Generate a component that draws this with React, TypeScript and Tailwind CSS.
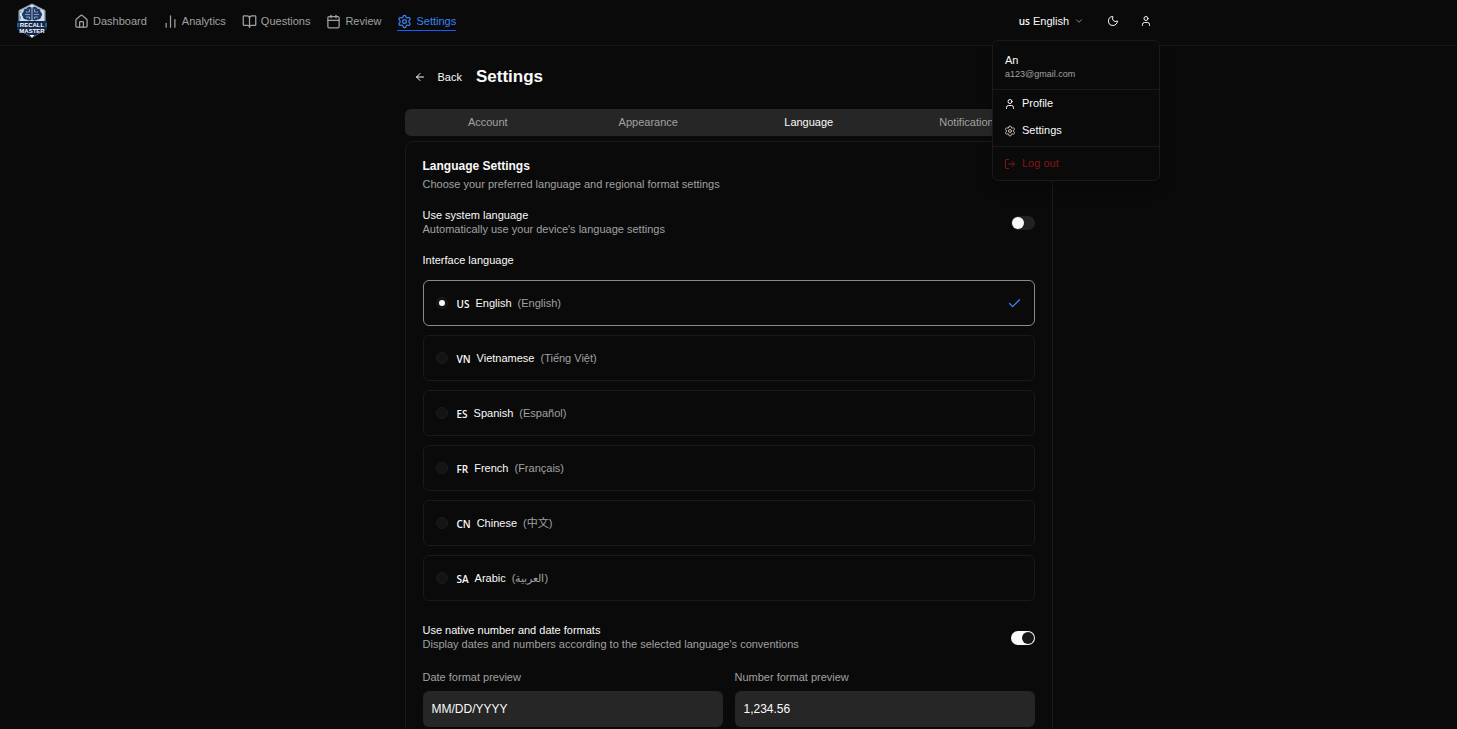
import { useState } from "react";
import type { ReactNode } from "react";
import {
  ArrowLeft,
  BookOpen,
  Calendar,
  ChartNoAxesColumn,
  Check,
  ChevronDown,
  House,
  LogOut,
  Moon,
  Settings,
  User,
} from "lucide-react";

const navItems = [
  { label: "Dashboard", icon: House, active: false },
  { label: "Analytics", icon: ChartNoAxesColumn, active: false },
  { label: "Questions", icon: BookOpen, active: false },
  { label: "Review", icon: Calendar, active: false },
  { label: "Settings", icon: Settings, active: true },
];

const tabs = ["Account", "Appearance", "Language", "Notifications"];

const languages = [
  { code: "US", name: "English", native: "English" },
  { code: "VN", name: "Vietnamese", native: "Tiếng Việt" },
  { code: "ES", name: "Spanish", native: "Español" },
  { code: "FR", name: "French", native: "Français" },
  { code: "CN", name: "Chinese", native: "中文" },
  { code: "SA", name: "Arabic", native: "العربية" },
];

function Logo() {
  return (
    <svg viewBox="0 0 32 36" className="h-9 w-8" role="img" aria-label="Recall Master">
      <path d="M16 1 29 7.500v19L16 34.500 3 26.500V7.500Z" fill="#12284f" stroke="#c9d5e4" strokeWidth="0.800" />
      <path d="M16 1.500 28.500 7.800V18h-25V7.800Z" fill="#d3dde9" />
      <path
        d="M15.600 4.500c-2-1.400-4.300-.3-4.700 1-2.400-.1-3.800 1.600-3.300 3.300-2 1.200-2.200 3.700-.6 5 0 2 2 3.200 3.800 2.700 1.300 1.300 3.600 1.300 4.800.2Z M16.400 4.500c2-1.400 4.300-.3 4.700 1 2.400-.1 3.800 1.600 3.300 3.300 2 1.200 2.200 3.700.6 5 0 2-2 3.200-3.800 2.700-1.300 1.300-3.600 1.300-4.800.2Z"
        fill="#203a66"
      />
      <path
        d="M13.500 6v3H10M14 11.500H9M13.500 16v-2H10M18.500 6v3H22M18 11.500h5M18.500 16v-2H22"
        fill="none"
        stroke="#b9c9dd"
        strokeWidth="0.700"
      />
      <path d="M1 18h30v9l-3 .5L16 34.500 4 27.500 1 27Z" fill="#12284f" />
      <path d="M5 8v2M4.500 13v3M2 20v4M30 20v4" stroke="#3fa2c9" strokeWidth="0.900" />
      <path d="M13.500 32h5L16 34.500Z" fill="#ffffff" />
      <g fill="#ffffff" textAnchor="middle" className="font-['Liberation_Sans',Arial,sans-serif] font-bold">
        <text x="16" y="24" fontSize="6">RECALL</text>
        <text x="16" y="29.500" fontSize="6">MASTER</text>
      </g>
    </svg>
  );
}

function Header() {
  return (
    <header className="border-b border-[#171717]">
      <div className="flex h-[45px] max-w-[1160px] items-center justify-between pr-[7px] pl-4">
        <div className="flex items-center gap-[26px]">
          <a href="#home" className="-mt-1">
            <Logo />
          </a>
          <nav className="flex gap-4 pb-px">
            {navItems.map(({ label, icon: Icon, active }) => (
              <a
                key={label}
                href={`#${label.toLowerCase()}`}
                aria-current={active ? "page" : undefined}
                className={
                  active
                    ? "flex h-[18px] items-center gap-1 border-b border-[#155dfc] text-[#3b82f6]"
                    : "flex h-[18px] items-center gap-1 border-b border-transparent text-[#a1a1a1]"
                }
              >
                <Icon size={15} />
                {label}
              </a>
            ))}
          </nav>
        </div>
        <div className="flex items-center gap-5 pb-[3px]">
          <button type="button" className="mr-[3px] flex items-center gap-[3px]">
            <span className="font-['Open_Sans',sans-serif] text-[10px] font-semibold">us</span>
            English
            <ChevronDown size={10} className="ml-0.5 text-[#a1a1a1]" />
          </button>
          <button type="button" aria-label="Toggle theme">
            <Moon size={12} />
          </button>
          <div className="relative mx-px flex">
            <button type="button" aria-label="Account menu">
              <User size={12} />
            </button>
            <AccountMenu />
          </div>
        </div>
      </div>
    </header>
  );
}

function AccountMenu() {
  return (
    <div className="absolute top-[25px] -right-2 z-10 w-[168px] rounded-md border border-[#1a1a1a] bg-[#0a0a0a] shadow-lg">
      <div className="border-b border-[#1a1a1a] px-3 pt-3 pb-2 leading-[14px]">
        <p>An</p>
        <p className="text-[9px] text-[#a1a1a1]">a123@gmail.com</p>
      </div>
      <div className="border-b border-[#1a1a1a] pb-0.5">
        <a href="#profile" className="flex h-[27px] items-center gap-1.5 px-[11px]">
          <User size={12} />
          Profile
        </a>
        <a href="#settings" className="flex h-[27px] items-center gap-1.5 px-[11px]">
          <Settings size={12} className="text-[#c4c4c4]" />
          Settings
        </a>
      </div>
      <button type="button" className="my-[3px] flex h-[27px] w-full items-center gap-1.5 px-[11px] text-[#82181a]">
        <LogOut size={12} />
        Log out
      </button>
    </div>
  );
}

function Switch({ id, checked, onChange }: { id: string; checked: boolean; onChange: (value: boolean) => void }) {
  return (
    <input
      id={id}
      type="checkbox"
      role="switch"
      checked={checked}
      onChange={(event) => onChange(event.target.checked)}
      className="mt-0.5 h-[14px] w-6 shrink-0 appearance-none rounded-full bg-[#222222] before:m-px before:block before:size-3 before:rounded-full before:bg-[#fafafa] checked:bg-[#fafafa] checked:before:ml-[11px] checked:before:bg-[#171717]"
    />
  );
}

function SwitchRow({
  id,
  title,
  checked,
  onChange,
  children,
}: {
  id: string;
  title: string;
  checked: boolean;
  onChange: (value: boolean) => void;
  children: ReactNode;
}) {
  return (
    <div className="flex items-center justify-between leading-[14px]">
      <div>
        <label htmlFor={id}>{title}</label>
        <p className="text-[#a1a1a1]">{children}</p>
      </div>
      <Switch id={id} checked={checked} onChange={onChange} />
    </div>
  );
}

function Preview({ label, value }: { label: string; value: string }) {
  return (
    <div>
      <p className="leading-4 text-[#a1a1a1]">{label}</p>
      <div className="mt-1.5 flex h-9 items-center rounded-md bg-[#262626] px-[9px] text-xs">{value}</div>
    </div>
  );
}

export default function App() {
  const [selected, setSelected] = useState("US");
  const [systemLanguage, setSystemLanguage] = useState(false);
  const [nativeFormats, setNativeFormats] = useState(true);

  return (
    <div className="h-screen overflow-y-auto bg-[#0a0a0a] font-['Liberation_Sans',Arial,'Noto_Sans_CJK_SC',sans-serif] text-[11px] text-[#fafafa] [scrollbar-width:none]">
      <Header />
      <main className="mx-auto max-w-[672px] px-3 pt-[17px] pb-6">
        <div className="flex h-7 items-center gap-[14px]">
          <button type="button" className="flex items-center gap-3 pl-[9px]">
            <ArrowLeft size={12} />
            Back
          </button>
          <h1 className="text-[17px] font-bold">Settings</h1>
        </div>

        <div role="tablist" className="mt-[18px] grid h-[27px] grid-cols-4 rounded-md bg-[#262626] px-[3px]">
          {tabs.map((tab) => (
            <button
              key={tab}
              type="button"
              role="tab"
              aria-selected={tab === "Language"}
              className={tab === "Language" ? "text-[#fafafa]" : "text-[#a1a1a1]"}
            >
              {tab}
            </button>
          ))}
        </div>

        <section className="mt-[5px] rounded-lg border border-[#1a1a1a] px-[17px] pt-4 pb-[18px]">
          <h2 className="text-xs leading-4 font-bold">Language Settings</h2>
          <p className="mt-0.5 leading-4 text-[#a1a1a1]">Choose your preferred language and regional format settings</p>

          <div className="mt-4">
            <SwitchRow id="system-language" title="Use system language" checked={systemLanguage} onChange={setSystemLanguage}>
              Automatically use your device's language settings
            </SwitchRow>
          </div>

          <fieldset className="mt-4">
            <legend className="leading-4">Interface language</legend>
            <div className="mt-3 flex flex-col gap-[9px]">
              {languages.map(({ code, name, native }) => (
                <label
                  key={code}
                  className={
                    selected === code
                      ? "flex h-[46px] items-center rounded-md border border-[#8a8a8a] px-3"
                      : "flex h-[46px] items-center rounded-md border border-[#1a1a1a] px-3"
                  }
                >
                  <input
                    type="radio"
                    name="language"
                    value={code}
                    checked={selected === code}
                    onChange={() => setSelected(code)}
                    className="grid size-3 appearance-none place-items-center rounded-full border border-[#1c1c1c] bg-[#141414] before:size-1.5 before:rounded-full checked:before:bg-[#fafafa]"
                  />
                  <span className="ml-[9px] pt-0.5 font-['Open_Sans',sans-serif] text-[10px] font-semibold">{code}</span>
                  <span className="ml-1.5">{name}</span>
                  <span className="ml-1.5 text-[#a1a1a1]">({native})</span>
                  {selected === code && <Check size={15} className="ml-auto text-[#3b82f6]" />}
                </label>
              ))}
            </div>
          </fieldset>

          <div className="mt-[22px]">
            <SwitchRow
              id="native-formats"
              title="Use native number and date formats"
              checked={nativeFormats}
              onChange={setNativeFormats}
            >
              Display dates and numbers according to the selected language's conventions
            </SwitchRow>
          </div>

          <div className="mt-[18px] grid grid-cols-2 gap-3">
            <Preview label="Date format preview" value="MM/DD/YYYY" />
            <Preview label="Number format preview" value="1,234.56" />
          </div>
        </section>
      </main>
    </div>
  );
}
